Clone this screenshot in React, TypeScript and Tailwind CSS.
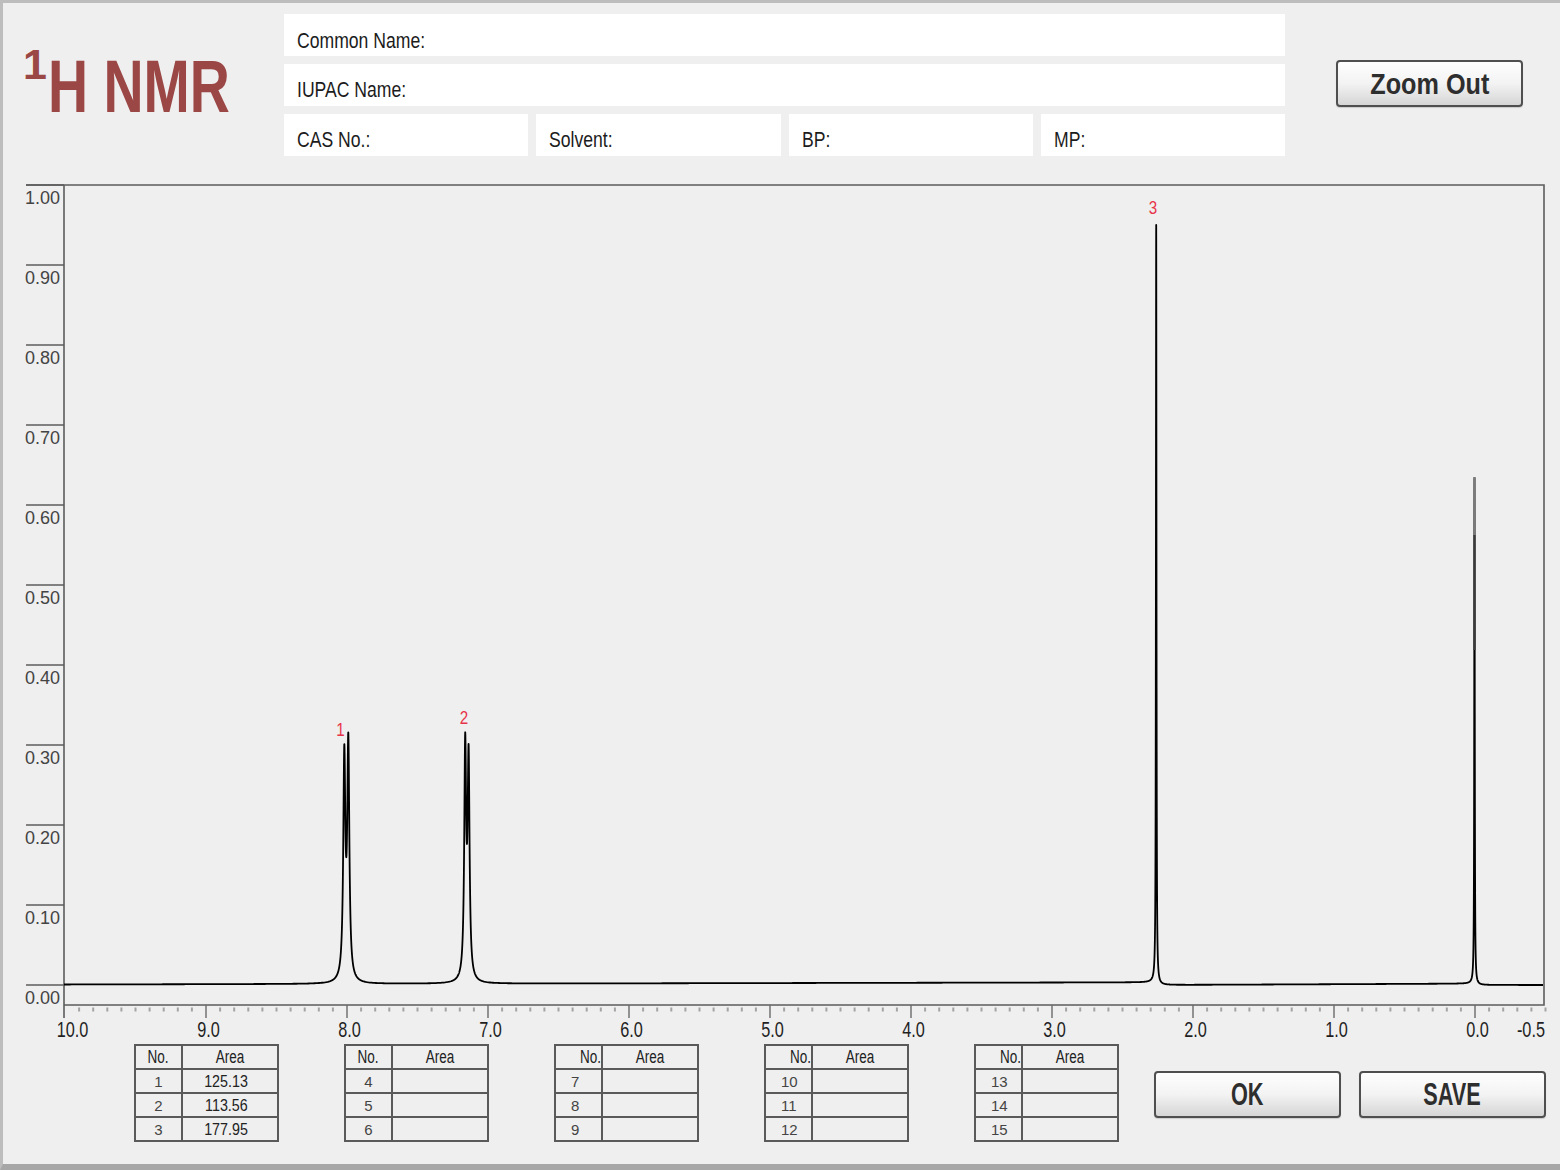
import React from 'react'

// ── Spectrum geometry (page pixel coordinates) ───────────────────────────────

const X0 = 65 // 10.0 ppm
const PX_PER_PPM = 141
const ppmX = (ppm: number) => X0 + (10 - ppm) * PX_PER_PPM
const Y_TOP = 185
const Y_AXIS = 1005
const RIGHT = 1544

type Line = { x: number; h: number; w: number }

const LINES: Line[] = [
  { x: 344.3, h: 219, w: 1.25 },
  { x: 348.3, h: 232, w: 1.25 },
  { x: 465.2, h: 229, w: 1.15 },
  { x: 468.6, h: 216, w: 1.15 },
  { x: 1156.2, h: 760, w: 0.32 },
  { x: 1474.5, h: 507, w: 0.3 },
]

const baseline = (x: number) => {
  if (x < 1156) return 984.5 - ((x - 65) / (1156 - 65)) * 2.2
  if (x < 1474) return 985 - ((x - 1156) / (1474 - 1156)) * 1.4
  return 985
}

const buildPath = () => {
  const xs: number[] = []
  for (let x = 64; x <= RIGHT - 1; x += 1.5) xs.push(x)
  LINES.forEach((l) => {
    for (let x = l.x - 14; x <= l.x + 14; x += 0.04) xs.push(x)
  })
  xs.sort((a, b) => a - b)
  let d = ''
  xs.forEach((x, i) => {
    let y = baseline(x)
    LINES.forEach((l) => {
      const t = (x - l.x) / l.w
      y -= l.h / (1 + t * t)
    })
    d += (i === 0 ? 'M' : 'L') + x.toFixed(2) + ' ' + y.toFixed(2)
  })
  return d
}

const SPECTRUM = buildPath()

const X_LABELS = [
  { t: '10.0', x: 72.5, anchor: 'middle' },
  { t: '9.0', x: ppmX(9) + 2.5, anchor: 'middle' },
  { t: '8.0', x: ppmX(8) + 2.5, anchor: 'middle' },
  { t: '7.0', x: ppmX(7) + 2.5, anchor: 'middle' },
  { t: '6.0', x: ppmX(6) + 2.5, anchor: 'middle' },
  { t: '5.0', x: ppmX(5) + 2.5, anchor: 'middle' },
  { t: '4.0', x: ppmX(4) + 2.5, anchor: 'middle' },
  { t: '3.0', x: ppmX(3) + 2.5, anchor: 'middle' },
  { t: '2.0', x: ppmX(2) + 2.5, anchor: 'middle' },
  { t: '1.0', x: ppmX(1) + 2.5, anchor: 'middle' },
  { t: '0.0', x: ppmX(0) + 2.5, anchor: 'middle' },
  { t: '-0.5', x: 1545, anchor: 'end' },
]

const PEAK_LABELS = [
  { t: '1', x: 340.5, y: 736 },
  { t: '2', x: 464, y: 724 },
  { t: '3', x: 1153, y: 214 },
]

function Spectrum() {
  const minor = Array.from({ length: 106 }, (_, i) => i).filter((i) => i % 10 !== 0)
  return (
    <svg width={1557} height={862} viewBox="3 180 1557 862" className="block">
      {/* y ticks + labels */}
      {Array.from({ length: 11 }, (_, k) => {
        const y = Y_TOP + k * 80
        return (
          <g key={k}>
            <line x1={26} x2={64} y1={y} y2={y} stroke="#5c5c5c" strokeWidth={1.5} />
            <text x={60} y={y + 19} textAnchor="end" fontSize={18} fill="#444">
              {(1 - k * 0.1).toFixed(2)}
            </text>
          </g>
        )
      })}

      {/* frame */}
      <path
        d={`M26 ${Y_TOP} H${RIGHT} V${Y_AXIS} H64 M64 ${Y_TOP} V1018`}
        fill="none"
        stroke="#5c5c5c"
        strokeWidth={1.6}
      />

      {/* x ticks */}
      {minor.map((i) => (
        <rect key={i} x={X0 + i * 14.1 - 1} y={1007.5} width={2} height={4} fill="#a3a3a3" />
      ))}
      {Array.from({ length: 10 }, (_, i) => i + 1).map((i) => (
        <line key={i} x1={X0 + i * PX_PER_PPM} x2={X0 + i * PX_PER_PPM} y1={Y_AXIS} y2={1018} stroke="#6a6a6a" strokeWidth={1.4} />
      ))}
      {X_LABELS.map((l) => (
        <text
          key={l.t}
          transform={`translate(${l.x} 1037) scale(0.74 1)`}
          textAnchor={l.anchor as 'middle' | 'end'}
          fontSize={22}
          fill="#1f1f1f"
        >
          {l.t}
        </text>
      ))}

      {/* spectrum */}
      <path d={SPECTRUM} fill="none" stroke="#000" strokeWidth={1.8} strokeLinejoin="round" />
      {/* faint top of the reference peak */}
      <line x1={1474.5} x2={1474.5} y1={477} y2={535} stroke="#7a7a7a" strokeWidth={2.2} />
      <line x1={1474.5} x2={1474.5} y1={535} y2={650} stroke="#3a3a3a" strokeWidth={2.2} />

      {PEAK_LABELS.map((p) => (
        <text key={p.t} transform={`translate(${p.x} ${p.y}) scale(0.8 1)`} textAnchor="middle" fontSize={19} fill="#e8344a">
          {p.t}
        </text>
      ))}
    </svg>
  )
}

// ── Peak area table ──────────────────────────────────────────────────────────

type TableProps = { nos: number[]; areas?: string[]; left?: boolean }

function AreaTable({ nos, areas = [], left = false }: TableProps) {
  return (
    <div className="w-[145px] shrink-0 border-2 border-[#5a5a5a]">
      <div className="flex h-[22px]">
        <div
          className={
            'flex w-[47px] items-center border-r-2 border-[#5a5a5a] ' +
            (left ? 'justify-end' : 'justify-center')
          }
        >
          <span
            className={
              'inline-block scale-x-[0.75] text-[18px] leading-none text-[#222] ' +
              (left ? 'origin-right' : 'origin-center')
            }
          >
            No.
          </span>
        </div>
        <div className="flex flex-1 items-center justify-center">
          <span className="inline-block scale-x-[0.75] text-[18px] leading-none text-[#222]">Area</span>
        </div>
      </div>
      {nos.map((n, i) => (
        <div key={n} className="flex h-[24px] border-t-2 border-[#5a5a5a]">
          <div
            className={
              'flex w-[47px] items-center border-r-2 border-[#5a5a5a] text-[15px] leading-none text-[#444] ' +
              (left ? 'justify-start pl-[15px]' : 'justify-center')
            }
          >
            {n}
          </div>
          <div className="flex flex-1 items-center justify-center pr-[8px]">
            <span className="inline-block scale-x-[0.84] text-[17px] leading-none text-[#222]">{areas[i] ?? ''}</span>
          </div>
        </div>
      ))}
    </div>
  )
}

function Button({ label, scale }: { label: string; scale: 'ok' | 'zoom' }) {
  return (
    <button
      className="flex h-[47px] w-[187px] shrink-0 items-center justify-center rounded-[4px] border-2 border-[#4f4f4f] bg-linear-to-b from-[#fefefe] via-[#f3f3f3] to-[#d6d6d6] shadow-[0_1px_1px_rgba(0,0,0,0.15)]"
    >
      <span
        className={
          'inline-block font-bold leading-none text-[#2e2e2e] ' +
          (scale === 'zoom' ? 'scale-x-[0.84] text-[30px]' : 'scale-x-[0.7] text-[31px]')
        }
      >
        {label}
      </span>
    </button>
  )
}

export default function App() {
  return (
    <div className="h-[1170px] w-[1560px] overflow-hidden border-t-[3px] border-l-[3px] border-b-[6px] border-[#bdbdbd] border-b-[#a7a7a7] bg-[#efefef] font-['Liberation_Sans',Arial,sans-serif]">
      {/* ── Header ── */}
      <div className="flex items-start pt-[11px]">
        <div className="flex w-[281px] shrink-0 items-start pl-[20px] text-[#9b4745]">
          <span className="mt-[29px] text-[43px] font-bold leading-none">1</span>
          <span className="ml-[1px] mt-[36px] inline-block origin-left scale-x-[0.75] whitespace-nowrap text-[74px] font-bold leading-none">
            H NMR
          </span>
        </div>

        <div className="flex w-[1001px] shrink-0 flex-col gap-2">
          <div className="h-[42px] bg-white pl-[13px] pt-[16px]">
            <span className="inline-block origin-left scale-x-[0.8] whitespace-nowrap text-[22px] leading-none text-[#1c1c1c]">Common Name:</span>
          </div>
          <div className="h-[42px] bg-white pl-[13px] pt-[15px]">
            <span className="inline-block origin-left scale-x-[0.8] whitespace-nowrap text-[22px] leading-none text-[#1c1c1c]">IUPAC Name:</span>
          </div>
          <div className="grid grid-cols-4 gap-2">
            {['CAS No.:', 'Solvent:', 'BP:', 'MP:'].map((t) => (
              <div key={t} className="h-[42px] bg-white pl-[13px] pt-[15px]">
                <span className="inline-block origin-left scale-x-[0.8] whitespace-nowrap text-[22px] leading-none text-[#1c1c1c]">{t}</span>
              </div>
            ))}
          </div>
        </div>

        <div className="ml-[51px] mt-[46px]">
          <Button label="Zoom Out" scale="zoom" />
        </div>
      </div>

      {/* ── Spectrum ── */}
      <div className="mt-[24px]">
        <Spectrum />
      </div>

      {/* ── Tables + actions ── */}
      <div className="flex items-start pl-[131px] pt-[2px]">
        <div className="flex gap-[65px]">
          <AreaTable nos={[1, 2, 3]} areas={['125.13', '113.56', '177.95']} />
          <AreaTable nos={[4, 5, 6]} />
          <AreaTable nos={[7, 8, 9]} left />
          <AreaTable nos={[10, 11, 12]} left />
          <AreaTable nos={[13, 14, 15]} left />
        </div>
        <div className="ml-[35px] mt-[27px] flex gap-[18px]">
          <Button label="OK" scale="ok" />
          <Button label="SAVE" scale="ok" />
        </div>
      </div>
    </div>
  )
}
